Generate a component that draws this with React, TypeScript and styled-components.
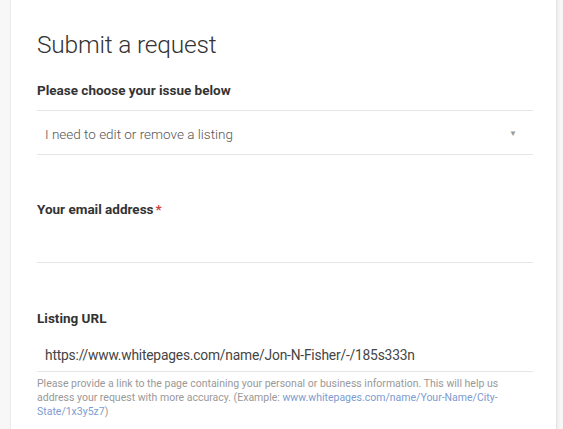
import React from 'react'
import styled, { createGlobalStyle } from 'styled-components'

const GlobalStyle = createGlobalStyle`
  html, body {
    margin: 0;
    padding: 0;
    background: #f7f7f7;
    font-family: Roboto, "Liberation Sans", Arial, sans-serif;
  }
`

const Page = styled.div`
  width: 563px;
  height: 429px;
  overflow: hidden;
  padding-left: 10px;
  box-sizing: border-box;
`

const Card = styled.div`
  width: 547px;
  height: 100%;
  box-sizing: border-box;
  background: #fff;
  border-left: 1px solid #ececec;
  border-right: 1px solid #e4e4e4;
  box-shadow: 1px 0 3px rgba(0, 0, 0, 0.06);
  padding: 30px 23px 0 26px;
`

const Title = styled.h1`
  margin: 0 0 22px;
  font-size: 24.5px;
  line-height: 30px;
  font-weight: 300;
  letter-spacing: -0.2px;
  color: #333;
`

const Label = styled.label<{ $gap?: number }>`
  display: block;
  margin-top: ${(p) => p.$gap ?? 0}px;
  font-size: 13.5px;
  line-height: 16px;
  font-weight: 700;
  color: #333;
`

const Required = styled.span`
  color: #d0413c;
  margin-left: 2px;
`

const SelectBox = styled.div`
  margin-top: 12px;
  height: 45px;
  box-sizing: border-box;
  border-top: 1px solid #e6e6e6;
  border-bottom: 1px solid #e6e6e6;
  display: flex;
  align-items: center;
  justify-content: space-between;
  padding: 2px 16px 0 8px;
`

const SelectText = styled.span`
  font-size: 13.5px;
  line-height: 16px;
  font-weight: 300;
  color: #555;
`

const Caret = styled.span`
  font-size: 8px;
  color: #9a9a9a;
`

const Input = styled.div<{ $h: number }>`
  height: ${(p) => p.$h}px;
  box-sizing: border-box;
  border-bottom: 1px solid #e6e6e6;
  padding: 19px 8px 0;
  font-size: 13.8px;
  line-height: 20px;
  letter-spacing: -0.2px;
  color: #444;
`

const Help = styled.p`
  margin: 5px 0 0;
  font-size: 10.5px;
  line-height: 14px;
  color: #999;
`

const HelpLink = styled.a`
  color: #7d9bd1;
  text-decoration: none;
`

export default function App() {
  return (
    <>
      <GlobalStyle />
      <Page>
        <Card>
          <Title>Submit a request</Title>
          <Label>Please choose your issue below</Label>
          <SelectBox>
            <SelectText>I need to edit or remove a listing</SelectText>
            <Caret>▼</Caret>
          </SelectBox>
          <Label $gap={46}>
            Your email address<Required>*</Required>
          </Label>
          <Input $h={46} />
          <Label $gap={47}>Listing URL</Label>
          <Input $h={46}>https://www.whitepages.com/name/Jon-N-Fisher/-/185s333n</Input>
          <Help>
            Please provide a link to the page containing your personal or business information. This
            will help us address your request with more accuracy. (Example:{' '}
            <HelpLink href="#">www.whitepages.com/name/Your-Name/City-State/1x3y5z7</HelpLink>)
          </Help>
        </Card>
      </Page>
    </>
  )
}
